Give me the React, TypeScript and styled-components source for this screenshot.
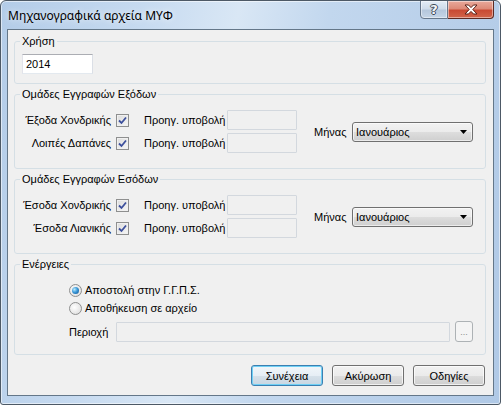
import styled, { createGlobalStyle } from 'styled-components';

const GlobalStyle = createGlobalStyle`
  html, body {
    margin: 0;
    padding: 0;
    background: #ffffff;
  }
  body {
    font-family: "Liberation Sans", Arial, sans-serif;
    font-size: 11px;
    color: #000;
  }
`;

const Window = styled.div`
  width: 501px;
  height: 405px;
  box-sizing: border-box;
  border: 1px solid #4d5966;
  border-radius: 6px 6px 3px 3px;
  background: linear-gradient(100deg, #b3cce8 0%, #c6daf0 25%, #d9e7f5 42%, #c2d7ee 58%, #b0c9e6 100%);
  box-shadow: inset 0 0 0 1px rgba(255, 255, 255, 0.55);
  display: flex;
  flex-direction: column;
  overflow: hidden;
`;

const TitleBar = styled.div`
  height: 28px;
  display: flex;
  align-items: flex-start;
  padding: 0 6px 0 7px;
`;

const Title = styled.div`
  margin-top: 7px;
  font-family: "Noto Sans", "Open Sans", sans-serif;
  font-size: 12px;
  line-height: 16px;
  text-shadow: 0 0 6px rgba(255, 255, 255, 0.9);
`;

const CaptionButtons = styled.div`
  margin-left: auto;
  margin-top: -1px;
  display: flex;
`;

const CaptionButton = styled.div<{ $close?: boolean }>`
  width: ${p => (p.$close ? 46 : 28)}px;
  height: 19px;
  box-sizing: border-box;
  border: 1px solid ${p => (p.$close ? '#5e2a22' : '#66778b')};
  border-left-width: ${p => (p.$close ? 0 : 1)}px;
  border-radius: ${p => (p.$close ? '0 0 4px 0' : '0 0 0 4px')};
  background: ${p =>
    p.$close
      ? 'linear-gradient(#e9a99b 0%, #dd8a78 45%, #c94a33 55%, #d1654a 100%)'
      : 'linear-gradient(#e3ecf6 0%, #cfdcea 45%, #b5c7dc 55%, #c5d5e7 100%)'};
  box-shadow: inset 0 0 0 1px rgba(255, 255, 255, 0.45);
  display: flex;
  align-items: center;
  justify-content: center;
`;

const HelpGlyph = styled.span`
  font-family: "DejaVu Sans", sans-serif;
  font-weight: bold;
  font-size: 13px;
  line-height: 13px;
  color: #f4f6f8;
  text-shadow: -1px 0 #3d4a58, 1px 0 #3d4a58, 0 -1px #3d4a58, 0 1px #3d4a58;
`;

const Client = styled.div`
  margin: 0 6px;
  height: 367px;
  box-sizing: border-box;
  border: 1px solid #647789;
  background: #f0f0f0;
  display: flex;
  flex-direction: column;
  gap: 3px;
  padding: 4px 7px 0 6px;
`;

const Group = styled.fieldset<{ $h: number }>`
  margin: 0;
  height: ${p => p.$h}px;
  box-sizing: border-box;
  border: 1px solid #d5dfe5;
  border-radius: 3px;
  padding: 0;
  min-width: 0;
`;

const Legend = styled.legend`
  margin-left: 5px;
  padding: 0 2px;
  line-height: 14px;
  font-size: 11px;
`;

const GroupContent = styled.div<{ $pt: number; $pl: number }>`
  padding: ${p => p.$pt}px 0 0 ${p => p.$pl}px;
`;

const YearInput = styled.div`
  width: 71px;
  height: 20px;
  box-sizing: border-box;
  border: 1px solid;
  border-color: #abadb3 #dbdfe6 #e3e9ef #e2e3ea;
  background: #fff;
  padding-left: 3px;
  display: flex;
  align-items: center;
`;

const GroupBody = styled.div`
  display: flex;
  align-items: center;
`;

const Rows = styled.div`
  display: flex;
  flex-direction: column;
  gap: 3px;
`;

const Row = styled.div`
  display: flex;
  align-items: center;
`;

const RowLabel = styled.span`
  width: 89px;
  text-align: right;
  white-space: nowrap;
`;

const CheckBox = styled.span`
  margin-left: 5px;
  width: 13px;
  height: 13px;
  box-sizing: border-box;
  border: 1px solid #8e8f8f;
  background: linear-gradient(135deg, #dcdcdc, #f6f6f6);
  box-shadow: inset 0 0 0 1px #f0f0f0;
  display: flex;
  align-items: center;
  justify-content: center;
`;

const PrevLabel = styled.span`
  margin-left: 15px;
  width: 83px;
  white-space: nowrap;
`;

const TextBox = styled.div<{ $w: number }>`
  width: ${p => p.$w}px;
  height: 20px;
  box-sizing: border-box;
  border: 1px solid #d3d8de;
  border-radius: 1px;
  background: #f0f0f0;
`;

const MonthLabel = styled.span`
  margin-left: 17px;
  width: 38px;
`;

const Combo = styled.div`
  width: 121px;
  height: 20px;
  box-sizing: border-box;
  border: 1px solid #707070;
  border-radius: 3px;
  background: linear-gradient(#f2f2f2 0%, #ebebeb 50%, #dddddd 51%, #cfcfcf 100%);
  box-shadow: inset 0 0 0 1px rgba(255, 255, 255, 0.6);
  display: flex;
  align-items: center;
  padding: 0 5px 0 3px;
`;

const ComboText = styled.span`
  flex: 1;
`;

const ActionBody = styled.div`
  display: flex;
  flex-direction: column;
`;

const RadioRow = styled.div`
  height: 18px;
  display: flex;
  align-items: center;
`;

const Radio = styled.span<{ $on?: boolean }>`
  width: 13px;
  height: 13px;
  box-sizing: border-box;
  border-radius: 50%;
  border: 1px solid #8e8f8f;
  background: radial-gradient(circle at 40% 40%, #ffffff, #d8d8d8);
  display: flex;
  align-items: center;
  justify-content: center;
  margin-right: 3px;
  &::after {
    content: '';
    display: ${p => (p.$on ? 'block' : 'none')};
    width: 7px;
    height: 7px;
    border-radius: 50%;
    background: radial-gradient(circle at 35% 35%, #b9ecff 0%, #3b98d8 45%, #0c4f8d 100%);
  }
`;

const PathRow = styled.div`
  margin-top: 4px;
  display: flex;
  align-items: center;
`;

const PathLabel = styled.span`
  width: 47px;
`;

const BrowseButton = styled.div`
  margin-left: 5px;
  width: 18px;
  height: 21px;
  box-sizing: border-box;
  border: 1px solid #adb2b5;
  border-radius: 3px;
  background: #f4f4f4;
  color: #8d8d8d;
  font-size: 9px;
  display: flex;
  align-items: flex-end;
  justify-content: center;
  padding-bottom: 4px;
`;

const ButtonBar = styled.div`
  margin-top: 7px;
  padding-right: 1px;
  display: flex;
  justify-content: flex-end;
  gap: 9px;
`;

const Button = styled.div<{ $default?: boolean }>`
  width: 72px;
  height: 21px;
  box-sizing: border-box;
  border: 1px solid ${p => (p.$default ? '#3c7fb1' : '#707070')};
  border-radius: 3px;
  background: ${p =>
    p.$default
      ? 'linear-gradient(#f1f6fa 0%, #e6eef5 50%, #d6e1ea 51%, #c8d6e2 100%)'
      : 'linear-gradient(#f2f2f2 0%, #ebebeb 50%, #dddddd 51%, #cfcfcf 100%)'};
  box-shadow: inset 0 0 0 1px ${p => (p.$default ? '#6fd0f5' : 'rgba(255, 255, 255, 0.7)')};
  display: flex;
  align-items: center;
  justify-content: center;
`;

const Check = () => (
  <svg width="9" height="9" viewBox="0 0 9 9">
    <path d="M1 4.5 L3.5 7 L8 1.5" fill="none" stroke="#3c4f9c" strokeWidth="1.8" />
  </svg>
);

const ComboArrow = () => (
  <svg width="7" height="4" viewBox="0 0 7 4">
    <path d="M0 0 H7 L3.5 4 Z" fill="#000" />
  </svg>
);

const CloseGlyph = () => (
  <svg width="14" height="11" viewBox="0 0 14 11">
    <path
      d="M1 1 H4.5 L7 3.6 L9.5 1 H13 L8.8 5.5 L13 10 H9.5 L7 7.4 L4.5 10 H1 L5.2 5.5 Z"
      fill="#fff"
      stroke="#5a2016"
      strokeWidth="1"
      strokeLinejoin="round"
    />
  </svg>
);

type Entry = { label: string };

const EntryGroup = ({ title, entries }: { title: string; entries: Entry[] }) => (
  <Group $h={82}>
    <Legend>{title}</Legend>
    <GroupContent $pt={9} $pl={7}>
      <GroupBody>
        <Rows>
          {entries.map(e => (
            <Row key={e.label}>
              <RowLabel>{e.label}</RowLabel>
              <CheckBox>
                <Check />
              </CheckBox>
              <PrevLabel>Προηγ. υποβολή</PrevLabel>
              <TextBox $w={70} />
            </Row>
          ))}
        </Rows>
        <MonthLabel>Μήνας</MonthLabel>
        <Combo>
          <ComboText>Ιανουάριος</ComboText>
          <ComboArrow />
        </Combo>
      </GroupBody>
    </GroupContent>
  </Group>
);

const App = (): JSX.Element => {
  return (
    <>
      <GlobalStyle />
      <Window>
        <TitleBar>
          <Title>Μηχανογραφικά αρχεία ΜΥΦ</Title>
          <CaptionButtons>
            <CaptionButton>
              <HelpGlyph>?</HelpGlyph>
            </CaptionButton>
            <CaptionButton $close>
              <CloseGlyph />
            </CaptionButton>
          </CaptionButtons>
        </TitleBar>
        <Client>
          <Group $h={50}>
            <Legend>Χρήση</Legend>
            <GroupContent $pt={6} $pl={7}>
              <YearInput>2014</YearInput>
            </GroupContent>
          </Group>
          <EntryGroup
            title="Ομάδες Εγγραφών Εξόδων"
            entries={[{ label: 'Έξοδα Χονδρικής' }, { label: 'Λοιπές Δαπάνες' }]}
          />
          <EntryGroup
            title="Ομάδες Εγγραφών Εσόδων"
            entries={[{ label: 'Έσοδα Χονδρικής' }, { label: 'Έσοδα Λιανικής' }]}
          />
          <Group $h={98}>
            <Legend>Ενέργειες</Legend>
            <GroupContent $pt={10} $pl={54}>
              <ActionBody>
                <RadioRow>
                  <Radio $on />
                  Αποστολή στην Γ.Γ.Π.Σ.
                </RadioRow>
                <RadioRow>
                  <Radio />
                  Αποθήκευση σε αρχείο
                </RadioRow>
                <PathRow>
                  <PathLabel>Περιοχή</PathLabel>
                  <TextBox $w={334} />
                  <BrowseButton>...</BrowseButton>
                </PathRow>
              </ActionBody>
            </GroupContent>
          </Group>
          <ButtonBar>
            <Button $default>Συνέχεια</Button>
            <Button>Ακύρωση</Button>
            <Button>Οδηγίες</Button>
          </ButtonBar>
        </Client>
      </Window>
    </>
  );
};

export default App;
